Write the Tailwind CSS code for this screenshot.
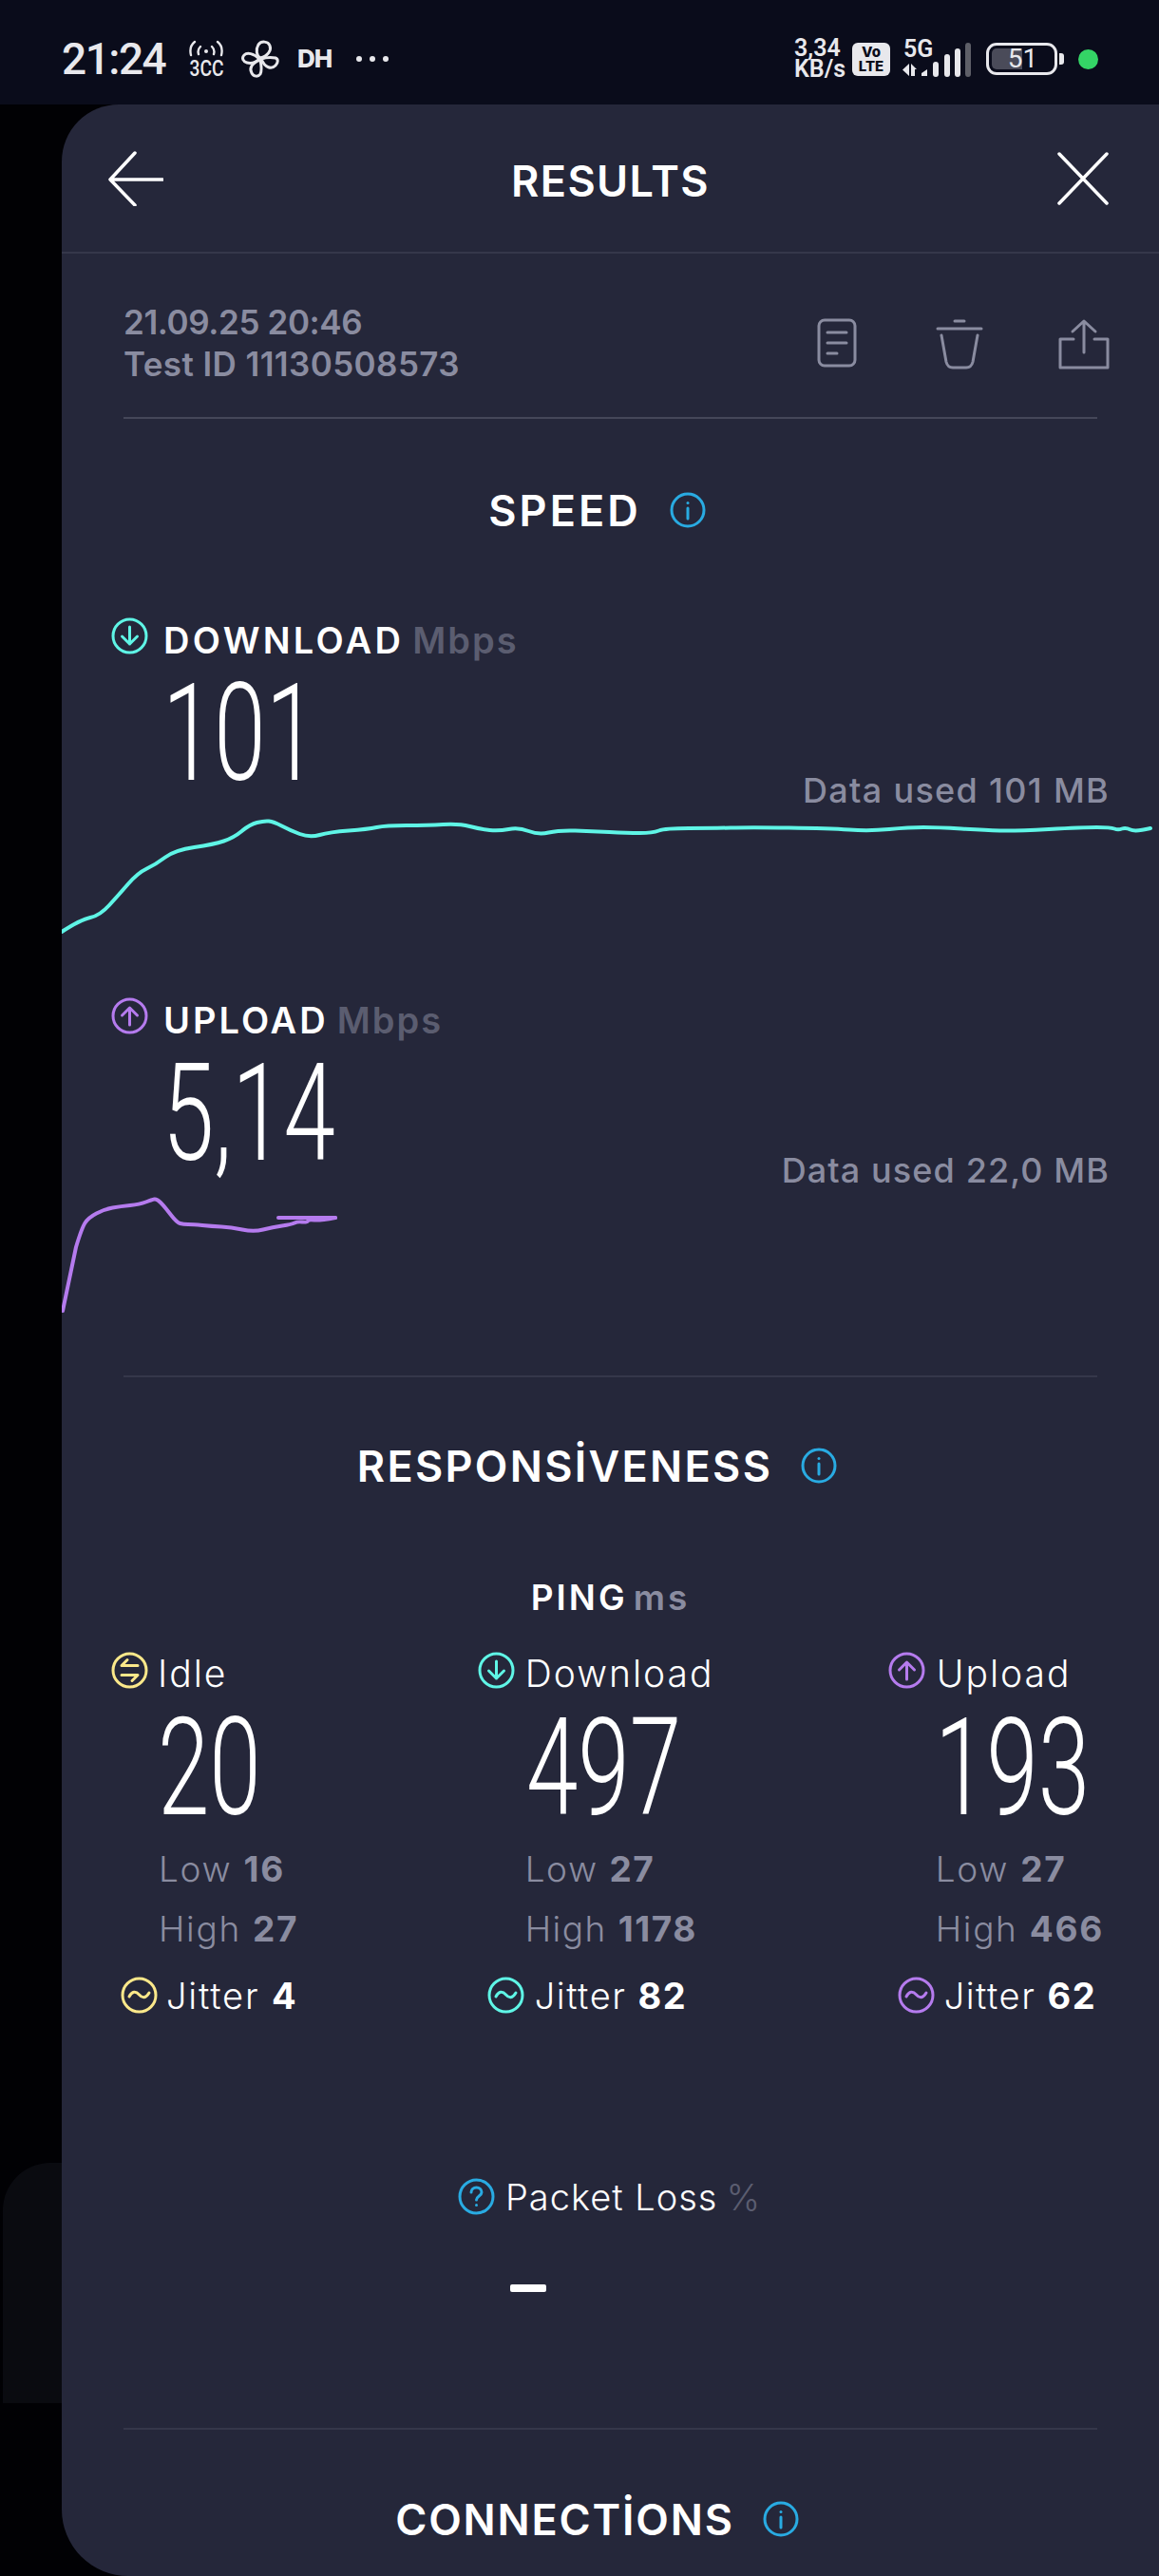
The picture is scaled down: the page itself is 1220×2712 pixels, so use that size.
<!DOCTYPE html>
<html>
<head>
<meta charset="utf-8">
<script src="https://cdn.jsdelivr.net/npm/@tailwindcss/browser@4"></script>
</head>
<body class="bg-black">
<div class="relative w-[1220px] h-[2712px] overflow-hidden bg-[#010104] font-['Inter','Liberation_Sans',sans-serif] text-white">
  <div class="absolute left-[3px] top-[2277px] w-[110px] h-[253px] rounded-tl-[50px] bg-[#0a0b10]"></div>

  <!-- status bar -->
  <div class="relative flex h-[110px] items-center bg-[#0a0c1b] pl-[65px] pt-[14px] text-[#e8e8ec]">
    <span class="w-[134px] font-['Roboto',sans-serif] text-[46px] leading-none font-medium tracking-[-1.500px]">21:24</span>
    <div class="flex w-[36px] flex-col items-center">
      <svg width="36" height="18" viewBox="0 0 36 18" fill="none" stroke="#e8e8ec" stroke-width="2.400" stroke-linecap="round"><path d="M6 2C1 6 1 12 2 16M30 2c5 4 5 10 4 14M12 7c-2 2-3 5-2 8M24 7c2 2 3 5 2 8"/><circle cx="18" cy="12" r="2" fill="#e8e8ec" stroke="none"/></svg>
      <span class="mt-[3px] h-[19px] origin-center scale-x-[0.8] font-['Roboto',sans-serif] text-[24px] leading-[19px] font-medium">3CC</span>
    </div>
    <svg class="ml-[19px]" width="40" height="40" viewBox="0 0 40 40" fill="none" stroke="#e8e8ec" stroke-width="3" stroke-linejoin="round"><path d="M20 19C16 17 15 10 18 5c3-4 10-4 12 1 2 5-2 11-10 13Z"/><path d="M21 20c3-1 10-2 15-1 3 1 3 5 0 8-4 4-11 3-15-7Z"/><path d="M20 21c1 5 2 11 0 15-2 3-7 3-9-1-3-5 0-11 9-14Z"/><path d="M19 20C13 14 6 13 3 16c-3 3-1 7 3 8 4 1 9 0 13-4Z"/></svg>
    <span class="ml-[19px] w-[39px] text-[26px] leading-none font-extrabold tracking-[-1px]">DH</span>
    <div class="ml-[23px] flex items-center gap-[8px]"><i class="size-[6px] rounded-full bg-[#e8e8ec]"></i><i class="size-[6px] rounded-full bg-[#e8e8ec]"></i><i class="size-[6px] rounded-full bg-[#e8e8ec]"></i></div>
    <div class="ml-auto flex items-center pr-[64px]">
      <div class="flex w-[61px] flex-col font-['Roboto',sans-serif] text-[25px] leading-[22px] font-semibold"><span>3,34</span><span>KB/s</span></div>
      <div class="flex h-[35px] w-[40px] flex-col items-center justify-center rounded-[6px] bg-[#e8e8ec] text-[15px] leading-[15px] font-extrabold text-[#0a0c1b]"><span>Vo</span><span>LTE</span></div>
      <div class="relative ml-[12px] h-[40px] w-[73px]">
        <span class="absolute left-[2px] top-[-3px] font-['Roboto',sans-serif] text-[25px] leading-[25px] font-semibold">5G</span>
        <svg class="absolute left-0 top-0" width="73" height="40" viewBox="949 43 73 40"><path d="M957 68v13l-7-6.500ZM959 68l6 6-2 0v7h-4Z" fill="#e8e8ec"/><path d="M970 81v-3l6-4v7Z" fill="#e8e8ec"/><g stroke-width="6" stroke-linecap="round"><path d="M985 69v10M997 61v18M1008 55v24" stroke="#e8e8ec"/><path d="M1019 49v30" stroke="#5e5f68"/></g></svg>
      </div>
      <div class="relative ml-[16px] h-[34px] w-[75px] rounded-[11px] border-[3px] border-[#e8e8ec] p-[3px]">
        <div class="h-full w-[32px] rounded-l-[5px] bg-[#4a4b59]"></div>
        <span class="absolute inset-0 flex items-center justify-center pl-[2px] font-['Roboto',sans-serif] text-[28px] leading-none">51</span>
      </div>
      <i class="ml-[2px] h-[12px] w-[5px] rounded-r-[3px] bg-[#e8e8ec]"></i>
      <i class="ml-[15px] size-[21px] rounded-full bg-[#34d566]"></i>
    </div>
  </div>

  <!-- panel -->
  <div class="relative ml-[65px] h-[2602px] overflow-hidden rounded-tl-[60px] rounded-bl-[70px] bg-[#25273a]">
    <div class="flex h-[157px] items-center justify-between border-b-2 border-[#35374a] pl-[49px] pr-[53px]">
      <svg width="58" height="58" viewBox="0 0 58 58" fill="none" stroke="#fff" stroke-width="3.500" stroke-linecap="round" stroke-linejoin="round"><path d="M28 2 2 30l26 27M3 30h54"/></svg>
      <span class="pt-[6px] text-[45px] leading-none font-semibold tracking-[1.400px]">RESULTS</span>
      <svg width="54" height="56" viewBox="0 0 54 56" fill="none" stroke="#fff" stroke-width="3.500" stroke-linecap="round"><path d="M2 2l50 52M52 2 2 54"/></svg>
    </div>

    <div class="mx-[65px] flex h-[174px] justify-between border-b-2 border-[#454759] pt-[50px]">
      <div class="text-[35px] leading-[44px] font-semibold text-[#8a8ca0]"><div class="tracking-[-0.400px]">21.09.25 20:46</div><div class="tracking-[0.400px]">Test ID 11130508573</div></div>
      <div class="-mr-[13px] flex items-start gap-[83px] pt-[18px]">
        <svg width="42" height="52" viewBox="0 0 42 52" fill="none" stroke="#8a8ca0" stroke-width="3" stroke-linecap="round"><rect x="2" y="2" width="38" height="48" rx="6"/><path d="M11 15h20M11 26h20M11 37h10"/></svg>
        <svg width="50" height="54" viewBox="0 0 50 54" fill="none" stroke="#8a8ca0" stroke-width="3" stroke-linecap="round" stroke-linejoin="round"><path d="M2 11h46M20 3h10"/><path d="M6 18l5 28c1 4 3 6 7 6h14c4 0 6-2 7-6l5-28"/></svg>
        <svg class="-ml-[4px]" width="54" height="54" viewBox="0 0 54 54" fill="none" stroke="#8a8ca0" stroke-width="3" stroke-linecap="round" stroke-linejoin="round"><path d="M27 36V3M15 14 27 3l12 11"/><path d="M16 22H2v30h50V22H38"/></svg>
      </div>
    </div>

    <!-- SPEED -->
    <div class="flex h-[192px] items-center justify-center gap-[30px] pr-[28px]">
      <span class="text-[45px] leading-none font-semibold tracking-[3px]">SPEED</span>
      <svg width="38" height="38" viewBox="0 0 38 38" fill="none" stroke="#29abe2" stroke-width="3"><circle cx="19" cy="19" r="17"/><path d="M19 17v11" stroke-linecap="round"/><circle cx="19" cy="11.500" r="1.500" fill="#29abe2" stroke="none"/></svg>
    </div>

    <div class="mt-[17px] flex h-[39px] items-center pl-[52px]">
      <svg class="mr-[16px]" width="39" height="39" viewBox="0 0 39 39" fill="none" stroke="#5ff5e6" stroke-width="3" stroke-linecap="round" stroke-linejoin="round"><circle cx="19.500" cy="19.500" r="17.500"/><path d="M19.500 10v18M11.500 20l8 8 8-8"/></svg>
      <span class="pt-[8px] text-[38px] leading-none font-semibold tracking-[3.300px]">DOWNLOAD</span>
      <span class="ml-[9px] pt-[8px] text-[38px] leading-none font-semibold tracking-[2px] text-[#5b5d70]">Mbps</span>
    </div>
    <div class="flex h-[161px] justify-between pl-[106px] pr-[52px]">
      <span class="mt-[34px] h-[100px] origin-left scale-x-[0.69] font-['Roboto',sans-serif] text-[142px] leading-[100px] font-light">101</span>
      <span class="mt-[125px] text-[36px] leading-[36px] font-medium tracking-[1.300px] text-[#8a8ca0]">Data used 101 MB</span>
    </div>
    <svg class="block" width="1155" height="140" viewBox="65 850 1155 140" fill="none" stroke="#5ff5e6" stroke-width="4" stroke-linejoin="round" stroke-linecap="round"><path d="M65 981Q85 968 95 966Q105 964 115 953Q125 942 135 930.500Q145 919 154.500 914.500Q164 910 174 902.500Q184 895 204.500 892Q225 889 235.500 885.500Q246 882 254.500 875Q263 868 270.500 866Q278 864 283 864.500Q288 865 296.500 869.500Q305 874 315.500 878Q326 882 336.500 879Q347 876 367 874.500Q387 873 396.500 871Q406 869 428 869Q450 869 466.500 868Q483 867 494.500 870Q506 873 515.500 874Q525 875 535.500 873Q546 871 556.500 875Q567 879 577.500 876.500Q588 874 605.500 874.500Q623 875 641.500 876Q660 877 673.500 877Q687 877 693.500 874.500Q700 872 725 872Q750 872 769 871.500Q788 871 830.500 871.500Q873 872 894 873.500Q915 875 936 873Q957 871 972 871Q987 871 1012 872.500Q1037 874 1052.500 874.500Q1068 875 1104 873Q1140 871 1154.500 871Q1169 871 1173 872.500Q1177 874 1181 872.500Q1185 871 1190 873.500Q1195 876 1211 872"/></svg>

    <div class="mt-[60px] flex h-[39px] items-center pl-[52px]">
      <svg class="mr-[16px]" width="39" height="39" viewBox="0 0 39 39" fill="none" stroke="#b57bee" stroke-width="3" stroke-linecap="round" stroke-linejoin="round"><circle cx="19.500" cy="19.500" r="17.500"/><path d="M19.500 29V11M11.500 19l8-8 8 8"/></svg>
      <span class="pt-[8px] text-[38px] leading-none font-semibold tracking-[3px]">UPLOAD</span>
      <span class="ml-[9px] pt-[8px] text-[38px] leading-none font-semibold tracking-[2px] text-[#5b5d70]">Mbps</span>
    </div>
    <div class="flex h-[161px] justify-between pl-[106px] pr-[52px]">
      <span class="mt-[34px] h-[100px] origin-left scale-x-[0.69] font-['Roboto',sans-serif] text-[142px] leading-[100px] font-light">5,14</span>
      <span class="mt-[125px] text-[36px] leading-[36px] font-medium tracking-[1.100px] text-[#8a8ca0]">Data used 22,0 MB</span>
    </div>
    <svg class="block" width="1155" height="140" viewBox="65 1250 1155 140" fill="none" stroke="#b57bee" stroke-width="4" stroke-linejoin="round" stroke-linecap="round"><path d="M66 1380L80 1313Q86 1293 89.500 1287.500Q93 1282 101.500 1277.500Q110 1273 118.500 1271.500Q127 1270 137 1269Q147 1268 153.500 1265.500Q160 1263 162.500 1262.500Q165 1262 169 1266Q173 1270 179.500 1278.500Q186 1287 189.500 1288Q193 1289 198 1289Q203 1289 213 1290Q223 1291 233 1291.500Q243 1292 255 1294.500Q267 1297 277 1294.500Q287 1292 297 1290.500Q307 1289 310 1287.500Q313 1286 318 1286.500Q323 1287 324 1285.500Q325 1284 331 1284.500Q337 1285 353 1282"/><path d="M293 1282h60"/></svg>

    <div class="mx-[65px] mt-[58px] border-b-2 border-[#35374a]"></div>

    <!-- RESPONSIVENESS -->
    <div class="mt-[73px] flex h-[40px] items-center justify-center gap-[30px] pr-[28px]">
      <span class="text-[45px] leading-none font-semibold tracking-[2.300px]">RESPONSİVENESS</span>
      <svg width="38" height="38" viewBox="0 0 38 38" fill="none" stroke="#29abe2" stroke-width="3"><circle cx="19" cy="19" r="17"/><path d="M19 17v11" stroke-linecap="round"/><circle cx="19" cy="11.500" r="1.500" fill="#29abe2" stroke="none"/></svg>
    </div>

    <div class="mt-[103px] flex h-[30px] items-center justify-center gap-[6px] text-[37px] leading-none font-semibold tracking-[3px]">
      <span>PING</span><span class="text-[#8a8ca0]">ms</span>
    </div>

    <div class="mt-[43px] flex pl-[52px]">
      <!-- Idle -->
      <div class="w-[392px]">
        <div class="flex h-[39px] items-center gap-[10px]">
          <svg width="39" height="39" viewBox="0 0 39 39" fill="none" stroke="#fbe88a" stroke-width="3" stroke-linecap="round" stroke-linejoin="round"><circle cx="19.500" cy="19.500" r="17.500"/><path d="M28 14.500H11l6-6M11 24.500h17l-6 6"/></svg>
          <span class="pt-[6px] text-[39px] leading-none font-light tracking-[2px]">Idle</span>
        </div>
        <div class="pl-[49px]"><div class="mt-[34px] h-[100px] origin-left scale-x-[0.69] font-['Roboto',sans-serif] text-[142px] leading-[100px] font-light">20</div></div>
        <div class="mt-[24px] pl-[50px] text-[37px] leading-[63px] font-light tracking-[1.700px] text-[#8a8ca0]"><div>Low <b class="font-bold">16</b></div><div>High <b class="font-bold">27</b></div></div>
        <div class="mt-[19px] flex h-[39px] items-center gap-[9px] pl-[10px]">
          <svg width="39" height="39" viewBox="0 0 39 39" fill="none" stroke="#fbe88a" stroke-width="3" stroke-linecap="round"><circle cx="19.500" cy="19.500" r="17.500"/><path d="M9 21c3-6 7-6 10.500-2s7 4 10.500-2"/></svg>
          <span class="text-[38px] leading-none font-light tracking-[1.800px]">Jitter <b class="font-bold">4</b></span>
        </div>
      </div>
      <!-- Download -->
      <div class="w-[439px]">
        <div class="flex h-[39px] items-center gap-[11px]">
          <svg width="39" height="39" viewBox="0 0 39 39" fill="none" stroke="#5ff5e6" stroke-width="3" stroke-linecap="round" stroke-linejoin="round"><circle cx="19.500" cy="19.500" r="17.500"/><path d="M19.500 10v18M11.500 20l8 8 8-8"/></svg>
          <span class="pt-[6px] text-[39px] leading-none font-light tracking-[2px]">Download</span>
        </div>
        <div class="pl-[51px]"><div class="mt-[34px] h-[100px] origin-left scale-x-[0.69] font-['Roboto',sans-serif] text-[142px] leading-[100px] font-light">497</div></div>
        <div class="mt-[24px] pl-[50px] text-[37px] leading-[63px] font-light tracking-[1.500px] text-[#8a8ca0]"><div>Low <b class="font-bold">27</b></div><div>High <b class="font-bold">1178</b></div></div>
        <div class="mt-[19px] flex h-[39px] items-center gap-[11px] pl-[10px]">
          <svg width="39" height="39" viewBox="0 0 39 39" fill="none" stroke="#5ff5e6" stroke-width="3" stroke-linecap="round"><circle cx="19.500" cy="19.500" r="17.500"/><path d="M9 21c3-6 7-6 10.500-2s7 4 10.500-2"/></svg>
          <span class="text-[38px] leading-none font-light tracking-[1.500px]">Jitter <b class="font-bold">82</b></span>
        </div>
      </div>
      <!-- Upload -->
      <div class="flex-1">
        <div class="flex h-[39px] items-center gap-[12px]">
          <svg width="39" height="39" viewBox="0 0 39 39" fill="none" stroke="#b57bee" stroke-width="3" stroke-linecap="round" stroke-linejoin="round"><circle cx="19.500" cy="19.500" r="17.500"/><path d="M19.500 29V11M11.500 19l8-8 8 8"/></svg>
          <span class="pt-[6px] text-[39px] leading-none font-light tracking-[2px]">Upload</span>
        </div>
        <div class="pl-[49px]"><div class="mt-[34px] h-[100px] origin-left scale-x-[0.69] font-['Roboto',sans-serif] text-[142px] leading-[100px] font-light">193</div></div>
        <div class="mt-[24px] pl-[50px] text-[37px] leading-[63px] font-light tracking-[1.700px] text-[#8a8ca0]"><div>Low <b class="font-bold">27</b></div><div>High <b class="font-bold">466</b></div></div>
        <div class="mt-[19px] flex h-[39px] items-center gap-[10px] pl-[10px]">
          <svg width="39" height="39" viewBox="0 0 39 39" fill="none" stroke="#b57bee" stroke-width="3" stroke-linecap="round"><circle cx="19.500" cy="19.500" r="17.500"/><path d="M9 21c3-6 7-6 10.500-2s7 4 10.500-2"/></svg>
          <span class="text-[38px] leading-none font-light tracking-[1.500px]">Jitter <b class="font-bold">62</b></span>
        </div>
      </div>
    </div>

    <!-- Packet loss -->
    <div class="mt-[173px] flex h-[39px] items-center pl-[417px]">
      <svg width="39" height="39" viewBox="0 0 39 39" fill="none" stroke="#29abe2" stroke-width="3" stroke-linecap="round"><circle cx="19.500" cy="19.500" r="17.500"/><path d="M14 15c0-3 2.500-5 5.500-5s5.500 2 5.500 5c0 4-5.500 4-5.500 8"/><circle cx="19.500" cy="28.500" r="1.500" fill="#29abe2" stroke="none"/></svg>
      <span class="ml-[11px] text-[38px] leading-none font-light tracking-[1px]">Packet Loss</span>
      <span class="ml-[9px] text-[38px] leading-none font-light text-[#5b5d70]">%</span>
    </div>
    <div class="ml-[472px] mt-[73px] h-[8px] w-[38px] rounded-[2px] bg-white"></div>

    <div class="mx-[65px] mt-[143px] border-b-2 border-[#35374a]"></div>

    <div class="mt-[74px] flex h-[40px] items-center justify-center gap-[30px] pr-[28px]">
      <span class="text-[45px] leading-none font-semibold tracking-[1.800px]">CONNECTİONS</span>
      <svg width="38" height="38" viewBox="0 0 38 38" fill="none" stroke="#29abe2" stroke-width="3"><circle cx="19" cy="19" r="17"/><path d="M19 17v11" stroke-linecap="round"/><circle cx="19" cy="11.500" r="1.500" fill="#29abe2" stroke="none"/></svg>
    </div>
  </div>
</div>
</body>
</html>
